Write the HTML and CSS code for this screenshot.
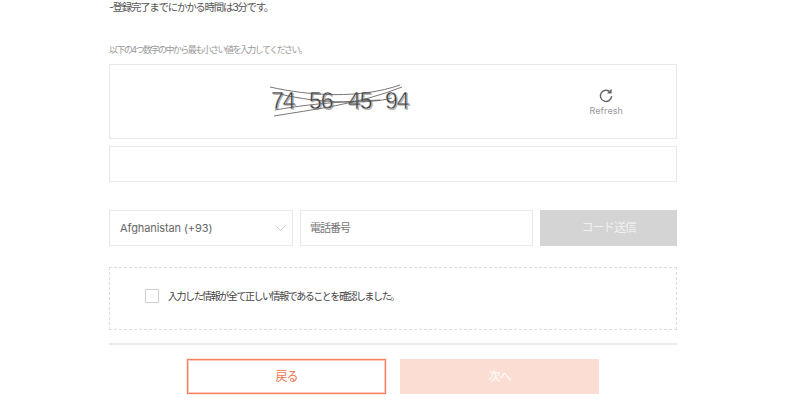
FILE: index.html
```html
<!DOCTYPE html>
<html lang="ja">
<head>
<meta charset="utf-8">
<title>登録</title>
<link rel="stylesheet" href="styles.css">
</head>
<body>
<main class="form">
  <p class="note">-登録完了までにかかる時間は3分です。</p>
  <p class="label">以下の4つ数字の中から最も小さい値を入力してください。</p>
  <div class="captcha">
    <svg class="captcha-img" width="146" height="36" viewBox="0 0 146 36">
      <g class="digits">
        <text x="2" y="26" class="shadow">74</text><text x="40" y="26" class="shadow">56</text><text x="79" y="26" class="shadow">45</text><text x="116" y="26" class="shadow">94</text>
        <text x="1" y="25">74</text><text x="39" y="25">56</text><text x="78" y="25">45</text><text x="115" y="25">94</text>
      </g>
      <path class="noise" d="M0 3 C40 12 90 15 130 1 M4 32 C40 26 90 20 132 3 M10 10 C50 20 100 20 122 14 M5 26 C50 18 90 17 110 16"/>
    </svg>
    <div class="refresh">
      <svg width="14" height="15" viewBox="0 0 14 15"><path class="refresh-arc" d="M11.4 4.4 A5.6 5.6 0 1 0 12.6 8"/><path class="refresh-head" d="M12.6 .8v4.6H8z"/></svg>
      <span>Refresh</span>
    </div>
  </div>
  <div class="field captcha-input"></div>
  <div class="phone-row">
    <div class="field select"><span>Afghanistan (+93)</span>
      <svg width="11" height="6" viewBox="0 0 11 6"><path class="chevron" d="M.5.5l5 5 5-5"/></svg>
    </div>
    <div class="field phone"><span class="lift">電話番号</span></div>
    <div class="send"><span class="lift">コード送信</span></div>
  </div>
  <div class="consent">
    <span class="checkbox"></span>
    <span class="consent-text">入力した情報が全て正しい情報であることを確認しました。</span>
  </div>
  <hr class="rule">
  <div class="actions">
    <div class="btn back">戻る</div>
    <div class="btn next">次へ</div>
  </div>
</main>
</body>
</html>
```
FILE: styles.css
```css
* { box-sizing: border-box; }
html, body { margin: 0; height: 401px; overflow: hidden; background: #fff; }
body { font-family: "Inter", "Noto Sans CJK JP", sans-serif; color: #555; }
.form { width: 568px; margin-left: 109px; display: flex; flex-direction: column; }
.lift { display: block; line-height: 14px; margin-bottom: 1px; }
.note { margin: 0; height: 14px; line-height: 14px; padding-top: 1px; font-size: 10.5px; letter-spacing: -1.3px; color: #555; }
.label { margin: 29px 0 0; height: 14px; line-height: 14px; font-size: 9px; letter-spacing: -1.55px; color: #999; }
.captcha { margin-top: 7px; height: 75px; border: 1px solid #e8e8e8; display: flex; align-items: center; padding-left: 160px; }
.captcha-img { flex: none; }
.digits text { font-family: "Liberation Sans", sans-serif; font-size: 23px; letter-spacing: -1px; fill: #3c3c3c; stroke: #fff; stroke-width: .35px; }
.digits .shadow { fill: #aaa; stroke: none; }
.noise { fill: none; stroke: #555; stroke-width: .8; }
.refresh { margin-left: auto; margin-right: 53px; display: flex; flex-direction: column; align-items: center; gap: 2px; font-size: 9px; color: #999; line-height: 11px; letter-spacing: .1px; }
.refresh svg { display: block; }
.refresh-arc { fill: none; stroke: #666; stroke-width: 1.4; }
.refresh-head { fill: #666; }
.field { border: 1px solid #e8e8e8; display: flex; align-items: center; }
.captcha-input { margin-top: 7px; height: 36px; }
.phone-row { margin-top: 28px; height: 36px; display: flex; gap: 7px; }
.select { width: 184px; padding: 0 6px 0 10px; justify-content: space-between; font-size: 11px; color: #666; letter-spacing: -.1px; }
.chevron { fill: none; stroke: #ccc; stroke-width: 1; }
.phone { width: 233px; padding-left: 9px; font-size: 11px; letter-spacing: -1px; color: #777; }
.send { width: 137px; background: #d4d4d4; color: #f0f0f0; display: flex; align-items: center; justify-content: center; font-size: 12px; letter-spacing: -1.2px; }
.consent { margin-top: 21px; height: 63px; border: 1px dashed #ddd; display: flex; align-items: center; padding: 0 0 5px 35px; gap: 9px; font-size: 10px; letter-spacing: -1.45px; color: #444; }
.consent-text { line-height: 14px; }
.checkbox { width: 14px; height: 14px; border: 1px solid #d0d0d0; flex: none; }
.rule { margin: 13px 0 0; border: 0; height: 2px; background: #ececec; }
.actions { margin-top: 14px; display: flex; justify-content: center; gap: 14px; }
.btn { width: 199px; height: 35px; display: flex; align-items: center; justify-content: center; font-size: 12px; line-height: 14px; letter-spacing: -1px; }
.back { border: 1px solid #f4805f; box-shadow: inset 0 0 0 1px #fcc9ba, 0 0 0 1px #feeae4; color: #f4734f; }
.next { background: #fcddd3; color: #fff; }
```
